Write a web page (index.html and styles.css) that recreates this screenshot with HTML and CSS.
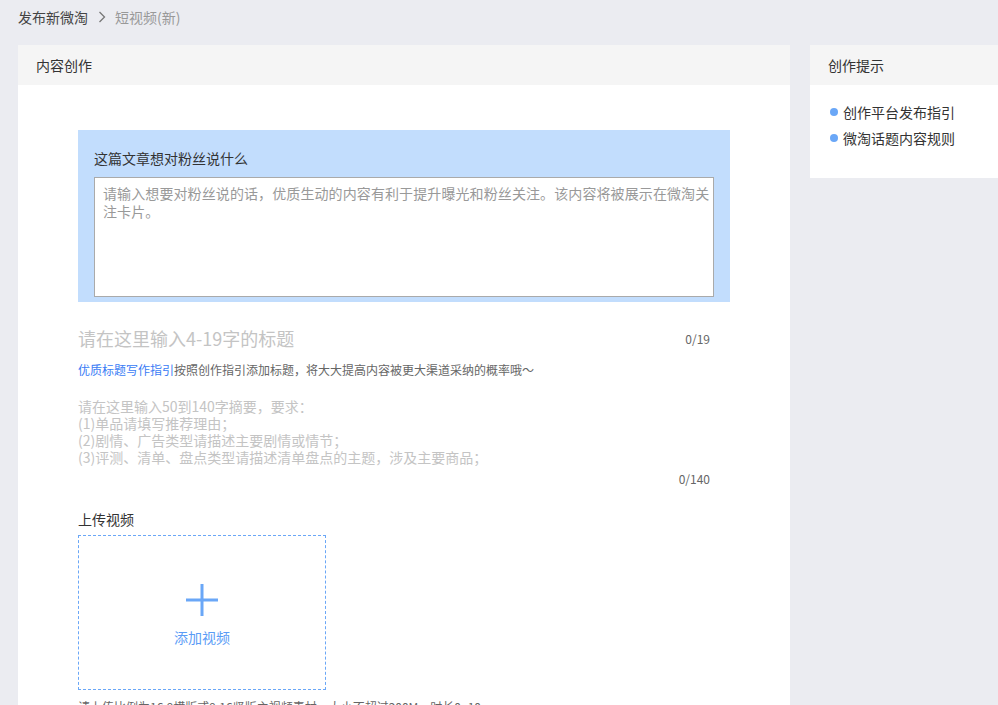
FILE: index.html
```html
<!DOCTYPE html>
<html lang="zh">
<head>
<meta charset="utf-8">
<title>短视频(新)</title>
<link rel="stylesheet" href="styles.css">
</head>
<body>
<div class="crumbs">
  <span class="crumb-main">发布新微淘</span>
  <svg class="crumb-sep" width="8" height="12" viewBox="0 0 8 12"><path d="M1.5 1 L6.5 6 L1.5 11" fill="none" stroke="#777" stroke-width="1.3"/></svg>
  <span class="crumb-cur">短视频(新)</span>
</div>
<div class="layout">
  <div class="card main">
    <div class="card-head">内容创作</div>
    <div class="card-body">
      <div class="fans-box">
        <div class="fans-label">这篇文章想对粉丝说什么</div>
        <div class="fans-input">请输入想要对粉丝说的话，优质生动的内容有利于提升曝光和粉丝关注。该内容将被展示在微淘关注卡片。</div>
      </div>
      <div class="title-row">
        <span class="title-ph">请在这里输入4-19字的标题</span>
        <span class="count">0/19</span>
      </div>
      <div class="hint"><span class="link">优质标题写作指引</span>按照创作指引添加标题，将大大提高内容被更大渠道采纳的概率哦～</div>
      <div class="summary">
        <div>请在这里输入50到140字摘要，要求：</div>
        <div>(1)单品请填写推荐理由；</div>
        <div>(2)剧情、广告类型请描述主要剧情或情节；</div>
        <div>(3)评测、清单、盘点类型请描述清单盘点的主题，涉及主要商品；</div>
      </div>
      <div class="count-row"><span class="count">0/140</span></div>
      <div class="upload-label">上传视频</div>
      <div class="upload-box">
        <svg width="34" height="34" viewBox="0 0 34 34"><path d="M17 1 V33 M1 17 H33" stroke="#6aa7f7" stroke-width="3"/></svg>
        <span class="upload-text">添加视频</span>
      </div>
      <div class="upload-note">请上传比例为16:9横版或9:16竖版主视频素材，大小不超过200M，时长0~10</div>
    </div>
  </div>
  <div class="card side">
    <div class="card-head">创作提示</div>
    <div class="side-body">
      <div class="tip"><span class="dot"></span>创作平台发布指引</div>
      <div class="tip"><span class="dot"></span>微淘话题内容规则</div>
    </div>
  </div>
</div>
</body>
</html>
```
FILE: styles.css
```css
html, body {
  margin: 0;
  padding: 0;
  background: #ebecf1;
  font-family: "Noto Sans CJK SC", "Noto Sans", sans-serif;
  overflow: hidden;
  height: 705px;
}
.crumbs {
  height: 33px;
  display: flex;
  align-items: center;
  padding-left: 18px;
  font-size: 14px;
}
.crumb-main { color: #444; }
.crumb-sep { margin: 0 9px 0 10px; }
.crumb-cur { color: #999; }
.layout {
  display: flex;
  align-items: flex-start;
  gap: 20px;
  padding-left: 18px;
  margin-top: 12px;
  width: 1200px;
}
.card { background: #fff; }
.main { width: 772px; height: 700px; }
.side { width: 220px; }
.card-head {
  height: 40px;
  line-height: 40px;
  background: #f5f5f5;
  padding-left: 18px;
  font-size: 14px;
  color: #333;
}
.card-body {
  padding: 45px 60px 0 60px;
}
.fans-box {
  width: 652px;
  box-sizing: border-box;
  background: #c2ddfd;
  padding: 18px 16px 5px 16px;
}
.fans-label {
  font-size: 14px;
  color: #333;
  line-height: 20px;
  margin-bottom: 9px;
}
.fans-input {
  height: 120px;
  box-sizing: border-box;
  background: #fff;
  border: 1px solid #aaa;
  padding: 6px 2px 6px 8px;
  font-size: 14px;
  letter-spacing: 0.1px;
  line-height: 18px;
  color: #999;
}
.title-row {
  width: 652px;
  display: flex;
  justify-content: space-between;
  align-items: center;
  margin-top: 23px;
  height: 26px;
  padding-right: 20px;
  box-sizing: border-box;
}
.title-ph {
  font-size: 18px;
  color: #c4c4c4;
}
.count {
  font-size: 12px;
  color: #666;
}
.hint {
  margin-top: 10px;
  font-size: 12px;
  line-height: 18px;
  color: #666;
}
.link { color: #3a7cf5; }
.summary {
  margin-top: 19px;
  font-size: 14px;
  line-height: 17px;
  color: #c4c4c4;
}
.count-row {
  width: 652px;
  display: flex;
  justify-content: flex-end;
  padding-right: 20px;
  box-sizing: border-box;
  margin-top: 4px;
  line-height: 18px;
}
.upload-label {
  margin-top: 21px;
  font-size: 14px;
  line-height: 20px;
  color: #333;
}
.upload-box {
  margin-top: 6px;
  width: 248px;
  height: 155px;
  box-sizing: border-box;
  border: 1px dashed #6aa7f7;
  display: flex;
  flex-direction: column;
  align-items: center;
  padding-top: 47px;
}
.upload-text {
  margin-top: 10px;
  font-size: 14px;
  color: #5b9cf6;
}
.upload-note {
  margin-top: 8px;
  font-size: 12px;
  color: #666;
  line-height: 18px;
}
.side-body {
  padding: 14px 0 27px 20px;
}
.tip {
  display: flex;
  align-items: center;
  font-size: 14px;
  color: #333;
  line-height: 26px;
}
.dot {
  width: 8px;
  height: 8px;
  border-radius: 50%;
  background: #6aa7f7;
  margin-right: 5px;
}
```
